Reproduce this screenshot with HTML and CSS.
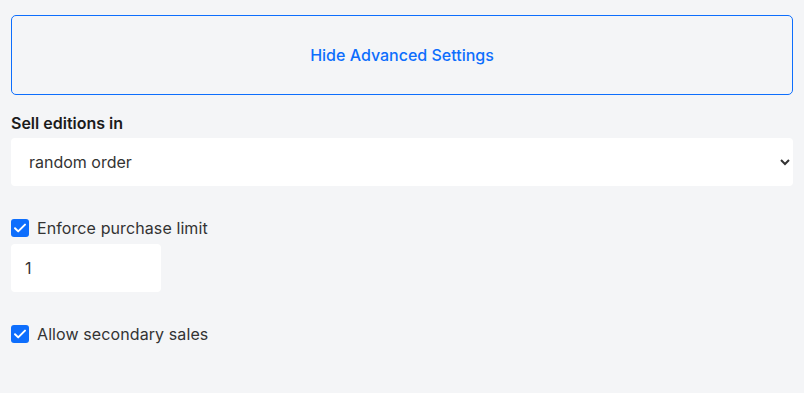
FILE: index.html
```html
<!DOCTYPE html>
<html lang="en">
<head>
  <meta charset="UTF-8" />
  <meta name="viewport" content="width=device-width, initial-scale=1.0"/>
  <title>Advanced Settings</title>
  <link rel="stylesheet" href="styles.css">
</head>
<body>
  <div class="settings">
    <button type="button" class="toggle-btn">Hide Advanced Settings</button>

    <div class="field">
      <label for="order" class="field-label">Sell editions in</label>
      <select id="order" class="select">
        <option>random order</option>
        <option>sequential order</option>
      </select>
    </div>

    <div class="field check-field">
      <label class="check">
        <input type="checkbox" checked />
        <span>Enforce purchase limit</span>
      </label>
      <input type="number" class="num-input" value="1" />
    </div>

    <div class="field check-field">
      <label class="check">
        <input type="checkbox" checked />
        <span>Allow secondary sales</span>
      </label>
    </div>
  </div>
</body>
</html>
```

FILE: styles.css
```css
* {
  margin: 0;
  padding: 0;
  box-sizing: border-box;
  font-family: 'Inter', sans-serif;
}

body {
  background-color: #f4f5f7;
  color: #212529;
  padding: 15px 11px;
}

.settings {
  display: flex;
  flex-direction: column;
}

.toggle-btn {
  width: 100%;
  height: 80px;
  background: transparent;
  border: 1px solid #0d6efd;
  border-radius: 5px;
  color: #0d6efd;
  font-size: 16px;
  font-weight: 500;
  cursor: pointer;
}

.field {
  margin-top: 18px;
}

.field-label {
  display: block;
  font-size: 16px;
  font-weight: 600;
  color: #1b1b1b;
  line-height: 20px;
  margin-bottom: 5px;
}

.select {
  width: 100%;
  height: 48px;
  background: #fff;
  border: none;
  border-radius: 4px;
  padding: 0 10px 0 14px;
  font-size: 16px;
  color: #333;
  outline: none;
}

.check-field {
  margin-top: 32px;
}

.check {
  display: flex;
  align-items: center;
  gap: 8px;
  font-size: 16px;
  letter-spacing: 0.1px;
  color: #333;
  line-height: 20px;
  cursor: pointer;
}

.check input {
  appearance: none;
  width: 18px;
  height: 18px;
  border-radius: 3px;
  background: #0d6efd url("data:image/svg+xml,%3Csvg xmlns='http://www.w3.org/2000/svg' viewBox='0 0 18 18'%3E%3Cpath d='M4 9.3l3.2 3.1L14 5.6' fill='none' stroke='%23fff' stroke-width='2' stroke-linecap='round' stroke-linejoin='round'/%3E%3C/svg%3E") center / 100% no-repeat;
  border: none;
  flex-shrink: 0;
}

.num-input {
  display: block;
  margin-top: 6px;
  width: 150px;
  height: 48px;
  background: #fff;
  border: none;
  border-radius: 4px;
  padding: 0 14px;
  font-size: 16px;
  color: #333;
  outline: none;
}
```
